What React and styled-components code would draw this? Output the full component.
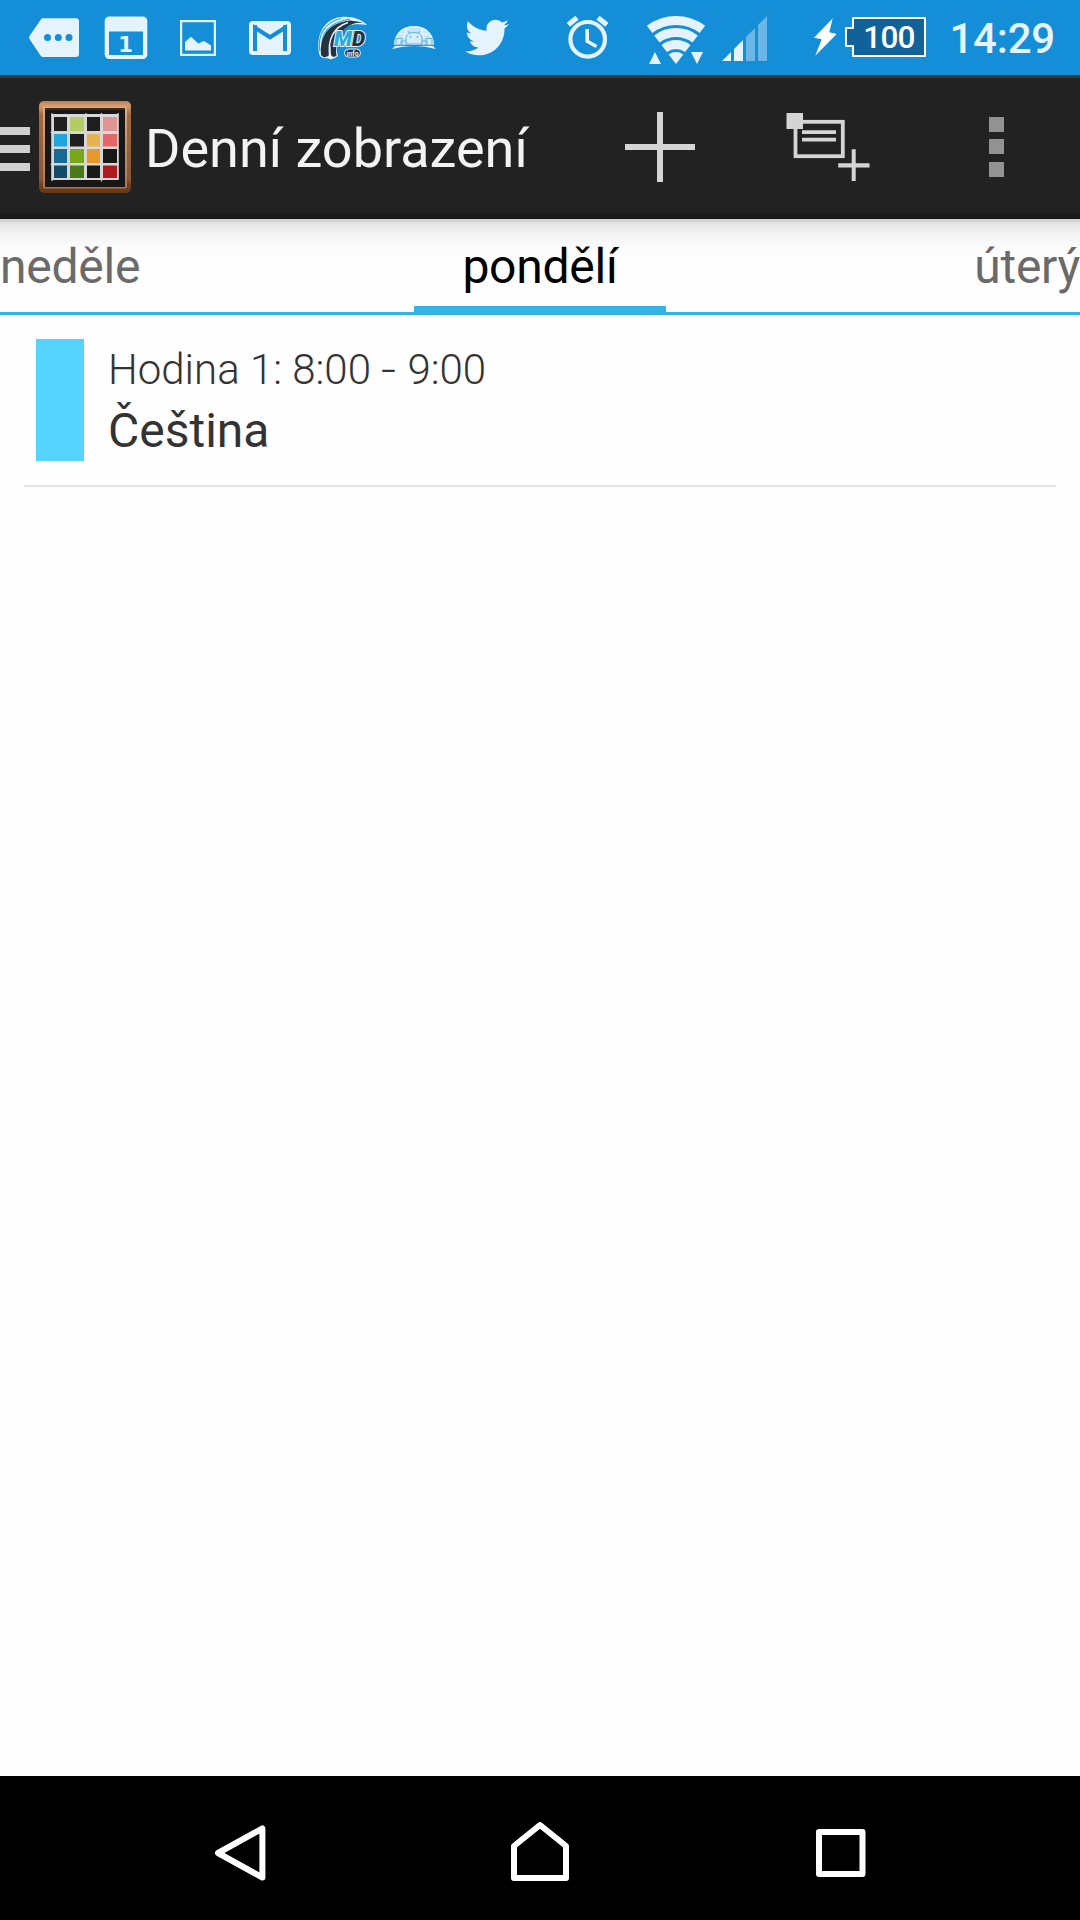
import React from 'react';
import styled, { createGlobalStyle } from 'styled-components';
import { FaTwitter } from 'react-icons/fa';

const chalkboard = [
  ['#1f1f1f', '#b5cc62', '#1f1f1f', '#e09496'],
  ['#20a6dc', '#1f1f1f', '#e6b44e', '#e66668'],
  ['#186a96', '#76a818', '#e8982a', '#181818'],
  ['#144a66', '#4a7a18', '#181818', '#b01a1e'],
];
const columns = [54, 70, 87, 103];
const rows = [117, 134, 149, 165.5];

const lessons = [
  {
    id: 1, name: 'Hodina 1', start: '8:00', end: '9:00', subject: 'Čeština', color: '#54d4ff',
  },
];

function StatusIcons() {
  return (
    <Notifications>
      <StatusSvg viewBox="18 0 72 75">
        <path d="M42.500 18.200H76a3 3 0 0 1 3 3V54a3 3 0 0 1-3 3H43.500Q41.500 57 40.500 55.500L29.500 39Q28.500 37.500 29.500 36L40.500 20Q41.500 18.200 42.500 18.200Z" />
        <g fill="#158ed8">
          <circle cx="47.500" cy="37.500" r="3.500" />
          <circle cx="58.300" cy="37.500" r="3.500" />
          <circle cx="69" cy="37.500" r="3.500" />
        </g>
      </StatusSvg>
      <StatusSvg viewBox="90 0 72 75">
        <rect x="104.700" y="16.500" width="42.600" height="42.500" rx="4.500" />
        <rect x="109" y="31.500" width="34" height="23.500" fill="#158ed8" />
        <DayNumber x="125.500" y="51.500">1</DayNumber>
      </StatusSvg>
      <StatusSvg viewBox="162 0 72 75">
        <rect x="181.100" y="21.100" width="33.800" height="33.800" fill="none" stroke="#e5f3fc" strokeWidth="2.200" />
        <path d="M185 50.500V42l6-5.200 7.300 6.700 5.700-2.500 7 4.500v5Z" />
      </StatusSvg>
      <StatusSvg viewBox="234 0 72 75">
        <rect x="249" y="21" width="42" height="34" rx="4" />
        <path d="M255 51V27.700L270 37.300L285 27.700V51" fill="none" stroke="#158ed8" strokeWidth="4" />
        <path d="M253 25h4v4h-4zM283 25h4v4h-4z" fill="#158ed8" />
      </StatusSvg>
      <StatusSvg viewBox="306 0 72 75">
        <path d="M319.500 55C315 37 323 19 341 17C352 16 361 19 367 25C354 23 346 25 341 31C335 38 336 49 338 56Q332 61 327 58Q322 59 319.500 55Z" />
        <g fill="none" stroke="#35a9dc" strokeWidth="1.200">
          <path d="M320 51C317 37 324 22 341 18.500" />
          <path d="M322 47C321 34 329 22 350 19" />
          <path d="M337 44C336 35 341 27 352 23.500" />
        </g>
        <path d="M321 55C320 36 328 23 350 20.500L364 22.500C346 21.500 331 34 328.500 56L324 57.500Z" fill="#26323d" />
        <path d="M331 55C329 38 336 25 358 22C344 25.500 334 36 336.500 56L333 57Z" fill="#26323d" />
        <path d="M330 57C327 39 334 27 348 22.500" fill="none" stroke="#e5f3fc" strokeWidth="1.500" />
        <LogoText x="334" y="46" fill="#2ba9d8">M</LogoText>
        <LogoText x="352" y="46" fill="#26323d">D</LogoText>
        <rect x="344.500" y="49" width="16" height="8" rx="4" fill="#26323d" stroke="#e5f3fc" strokeWidth="1" />
        <LogoLabel x="352.500" y="55.500">info</LogoLabel>
      </StatusSvg>
      <StatusSvg viewBox="378 0 72 75">
        <path d="M394 45C394 33 403 26 414 26C425 26 434 33 434 45Z" fill="#c5e5f8" />
        <path d="M392 49Q414 43 436 49L433 46H395Z" />
        <g fill="none" stroke="#e5f3fc" strokeWidth="1.500">
          <path d="M395 43C397 32 404 27 414 27C424 27 431 32 433 43M400 34H428M407 28L404 38M421 28L424 38" />
        </g>
        <g fill="#d6edfa" stroke="#60b3e5" strokeWidth="1">
          <path d="M406 44V39C406 34.500 409 32.500 414 32.500S422 34.500 422 39V44ZM408 31L410 34M420 31L418 34" />
          <path d="M396 38.500H402V45H396ZM426 38.500H432V45H426ZM401 41H406V45H401ZM422 41H427V45H422Z" />
        </g>
        <circle cx="410.500" cy="37" r=".8" fill="#278fd0" />
        <circle cx="417.500" cy="37" r=".8" fill="#278fd0" />
      </StatusSvg>
      <StatusSvg viewBox="450 0 72 75">
        <FaTwitter x="465" y="15.500" size={44} />
      </StatusSvg>
    </Notifications>
  );
}

function SystemIcons() {
  return (
    <System>
      <StatusSvg viewBox="552 0 72 75">
        <g fill="none" stroke="#e5f3fc">
          <circle cx="587.700" cy="39.300" r="17.300" strokeWidth="4.200" />
          <path d="M587.200 29V41.200L596.500 46.500" strokeWidth="3.600" />
          <path d="M568.300 24.800L577 17.700M598 17.700L606.900 24.800" strokeWidth="5" />
        </g>
      </StatusSvg>
      <StatusSvg viewBox="640 0 72 75">
        <g fill="none" stroke="#e5f3fc" strokeWidth="9">
          <path d="M649.600 29.400A43.500 43.500 0 0 1 702.400 29.400" />
          <path d="M656.900 39A31.500 31.500 0 0 1 695.100 39" />
          <path d="M664.200 48.500A19.500 19.500 0 0 1 687.800 48.500" />
        </g>
        <path d="M668.700 54.500A12 12 0 0 1 683.300 54.500L676 64ZM655 52L661 64H649ZM691 52H703L697 64Z" />
      </StatusSvg>
      <StatusSvg viewBox="708 0 72 75">
        <path d="M722 61L731 52V61ZM734 61V49L743 40V61Z" />
        <path d="M746 61V37L755 28V61ZM758 61V25L767 16V61Z" fill="#6cb5e7" />
      </StatusSvg>
      <BatterySvg viewBox="810 0 120 75">
        <path d="M832.700 18.300L814 37.700L821.700 39.200L815.300 55.700L836.700 34L829.300 32.300Z" fill="#fff" />
        <path d="M853 18H925V56H853V46H846V28H853Z" fill="#106299" stroke="#fff" strokeWidth="2" strokeLinejoin="round" />
        <BatteryText x="889" y="48">100</BatteryText>
      </BatterySvg>
      <Clock>14:29</Clock>
    </System>
  );
}

function AppIcon() {
  return (
    <AppSvg viewBox="39 101 92 92">
      <defs>
        <linearGradient id="wood" x1="0" y1="0" x2="0" y2="1">
          <stop offset="0" stopColor="#b98056" />
          <stop offset=".05" stopColor="#d29b70" />
          <stop offset=".15" stopColor="#a16a45" />
          <stop offset=".85" stopColor="#8a5736" />
          <stop offset=".9" stopColor="#774523" />
          <stop offset="1" stopColor="#633617" />
        </linearGradient>
        <linearGradient id="bevel" x1="0" y1="0" x2="0" y2="1">
          <stop offset="0" stopColor="#e0ab7c" />
          <stop offset="1" stopColor="#a97550" />
        </linearGradient>
      </defs>
      <rect x="39" y="101" width="92" height="92" rx="5" fill="url(#wood)" />
      <rect x="43" y="106.500" width="84" height="82" rx="2" fill="url(#bevel)" />
      <rect x="45" y="108" width="80" height="79" fill="#3f281b" />
      <rect x="45" y="110" width="80" height="77" fill="#171717" />
      <rect x="51.500" y="114" width="67" height="66" fill="#d7d7d7" />
      <path d="M52 113V181M50.500 132.500H119M86 113V118M101.500 113V181.500M118 113V180M50.500 164.500H119" stroke="#d7d7d7" strokeWidth="1.200" />
      {chalkboard.map((line, r) => line.map((color, c) => (
        <rect key={`${columns[c]}-${rows[r]}`} x={columns[c]} y={rows[r]} width={c % 2 ? 14 : 13} height={r % 2 ? 12.500 : 14} fill={color} />
      )))}
    </AppSvg>
  );
}

function ActionBar() {
  return (
    <Header>
      <Drawer>
        <span />
        <span />
        <span />
      </Drawer>
      <AppIcon />
      <Title>Denní zobrazení</Title>
      <Action aria-label="Přidat">
        <svg viewBox="576 75 168 144">
          <path d="M657 112H663V144H695V150H663V182H657V150H625V144H657Z" />
        </svg>
      </Action>
      <Action aria-label="Přidat poznámku">
        <svg viewBox="744 75 168 144">
          <rect x="795.500" y="121.800" width="47.300" height="34.400" fill="none" stroke="#d5d5d5" strokeWidth="3.800" />
          <path d="M786.500 113H803V129H786.500ZM802 130.300H836V134H802ZM802 137.800H836V141.500H802Z" />
          <path d="M851.700 149.300H855.700V163.300H869.500V167.500H855.700V181H851.700V167.500H838.200V163.300H851.700Z" />
        </svg>
      </Action>
      <Action aria-label="Více">
        <svg viewBox="912 75 168 144">
          <path fill="#929292" d="M989 117h15v15h-15zM989 139h15v15h-15zM989 162h15v15h-15z" />
        </svg>
      </Action>
    </Header>
  );
}

function App() {
  return (
    <>
      <GlobalStyle />
      <Screen>
        <StatusBar>
          <StatusIcons />
          <SystemIcons />
        </StatusBar>
        <ActionBar />
        <Tabs>
          <Tab>neděle</Tab>
          <Tab $active>pondělí</Tab>
          <Tab $end>úterý</Tab>
        </Tabs>
        <Lessons>
          {lessons.map((lesson) => (
            <Lesson key={lesson.id}>
              <Swatch $color={lesson.color} />
              <LessonInfo>
                <Time>
                  {`${lesson.name}: ${lesson.start} `}
                  <Dash>-</Dash>
                  {` ${lesson.end}`}
                </Time>
                <Subject>{lesson.subject}</Subject>
              </LessonInfo>
            </Lesson>
          ))}
        </Lessons>
        <NavBar>
          <NavSvg viewBox="126 1776 228 144">
            <path d="M262.400 1828.500V1877.500L218 1853Z" />
          </NavSvg>
          <NavSvg viewBox="426 1776 228 144">
            <path d="M514 1878V1846L540 1825L566 1846V1878Z" />
          </NavSvg>
          <NavSvg viewBox="726 1776 228 144">
            <rect x="819" y="1832" width="43.500" height="42" />
          </NavSvg>
        </NavBar>
      </Screen>
    </>
  );
}

const GlobalStyle = createGlobalStyle`
  body {
    margin: 0;
    background: #fff;
    font-family: Roboto, "Noto Sans", sans-serif;
  }
`;

const Screen = styled.div`
  display: flex;
  flex-direction: column;
  width: 1080px;
  height: 1920px;
  overflow: hidden;
  background: #fefefe;
`;

const StatusBar = styled.div`
  display: flex;
  justify-content: space-between;
  flex: none;
  height: 75px;
  padding: 0 25px 0 18px;
  background: #158ed8;
`;

const Notifications = styled.div`
  display: flex;
`;

const System = styled.div`
  display: flex;
  align-items: center;
`;

const StatusSvg = styled.svg`
  display: block;
  flex: none;
  width: 72px;
  height: 75px;
  fill: #e5f3fc;
  color: #e5f3fc;

  ${System} &:first-child {
    margin-right: 16px;
  }
  ${System} &:nth-child(2) {
    margin-right: -4px;
  }
`;

const BatterySvg = styled.svg`
  flex: none;
  width: 120px;
  height: 75px;
  margin-left: 30px;
`;

const BatteryText = styled.text`
  fill: #fff;
  font-size: 31.5px;
  font-weight: 500;
  letter-spacing: -.8px;
  text-anchor: middle;
`;

const DayNumber = styled.text`
  font: bold 21px "DejaVu Sans", sans-serif;
  text-anchor: middle;
`;

const LogoText = styled.text`
  font: italic 900 21px Roboto, sans-serif;
  stroke: #e5f3fc;
  stroke-width: 2px;
  paint-order: stroke;
`;

const LogoLabel = styled.text`
  font: bold 7px Roboto, sans-serif;
  text-anchor: middle;
`;

const Clock = styled.div`
  width: 125px;
  padding-top: 3px;
  color: #e5f3fc;
  font-size: 42px;
  font-weight: 500;
  letter-spacing: -.2px;
  line-height: 50px;
  text-align: right;
`;

const Header = styled.header`
  display: flex;
  align-items: center;
  box-sizing: border-box;
  flex: none;
  height: 144px;
  border-top: 3px solid #393939;
  border-bottom: 6px solid #1a1a1a;
  background: #222;
`;

const Drawer = styled.div`
  display: flex;
  flex-direction: column;
  gap: 10px;
  width: 30px;
  margin: 7px 9px 0 0;

  span {
    height: 8px;
    background: #d0d0d0;
  }
`;

const AppSvg = styled.svg`
  flex: none;
  width: 92px;
  height: 92px;
  margin-top: 3px;
`;

const Title = styled.h1`
  flex: 1;
  margin: 7px 0 0 14px;
  color: #f3f3f3;
  font-size: 54px;
  font-weight: 400;
  line-height: 64px;
  white-space: nowrap;
`;

const Action = styled.button`
  flex: none;
  width: 168px;
  height: 144px;
  margin: 3px 0 0;
  padding: 0;
  border: none;
  background: none;

  svg {
    display: block;
    width: 168px;
    height: 144px;
    fill: #d5d5d5;
  }
`;

const Tabs = styled.nav`
  display: grid;
  grid-template-columns: 1fr 252px 1fr;
  box-sizing: border-box;
  flex: none;
  height: 96px;
  background:
    linear-gradient(#36b3e5, #36b3e5) 0 93px / 100% 3px no-repeat,
    linear-gradient(#d2d2d2, #d2d2d2) 0 0 / 100% 3px no-repeat,
    linear-gradient(#dfdfdf, #f0f0f0 12px, #fafafa 26px, #fefefe 40px);
`;

const Tab = styled.div`
  box-sizing: border-box;
  height: 96px;
  padding-top: 20px;
  border-bottom: ${(props) => (props.$active ? '9px solid #36b3e5' : 'none')};
  color: ${(props) => (props.$active ? '#000' : '#6a6a6a')};
  font-size: 48px;
  letter-spacing: -.25px;
  line-height: 56px;
  text-align: ${(props) => {
    if (props.$active) return 'center';
    return props.$end ? 'right' : 'left';
  }};
`;

const Lessons = styled.main`
  flex: 1;
  padding: 0 24px;
`;

const Lesson = styled.div`
  display: flex;
  gap: 24px;
  padding: 24px 12px;
  border-bottom: 2px solid #e4e4e4;
`;

const Swatch = styled.div`
  width: 48px;
  height: 122px;
  background: ${(props) => props.$color};
`;

const LessonInfo = styled.div`
  display: flex;
  flex-direction: column;
  padding-top: 6px;
  color: #333;
`;

const Time = styled.div`
  font-size: 42px;
  font-weight: 300;
  line-height: 50px;
  white-space: pre;
`;

const Dash = styled.span`
  display: inline-block;
  width: 16px;
  transform: scaleX(1.25);
  transform-origin: left;
`;

const Subject = styled.div`
  margin-top: 8px;
  font-size: 48px;
  line-height: 56px;
`;

const NavBar = styled.footer`
  display: flex;
  justify-content: center;
  gap: 72px;
  flex: none;
  height: 144px;
  background: #000;
`;

const NavSvg = styled.svg`
  width: 228px;
  height: 144px;
  fill: none;
  stroke: #fff;
  stroke-width: 6px;
  stroke-linejoin: round;
`;

export default App;
